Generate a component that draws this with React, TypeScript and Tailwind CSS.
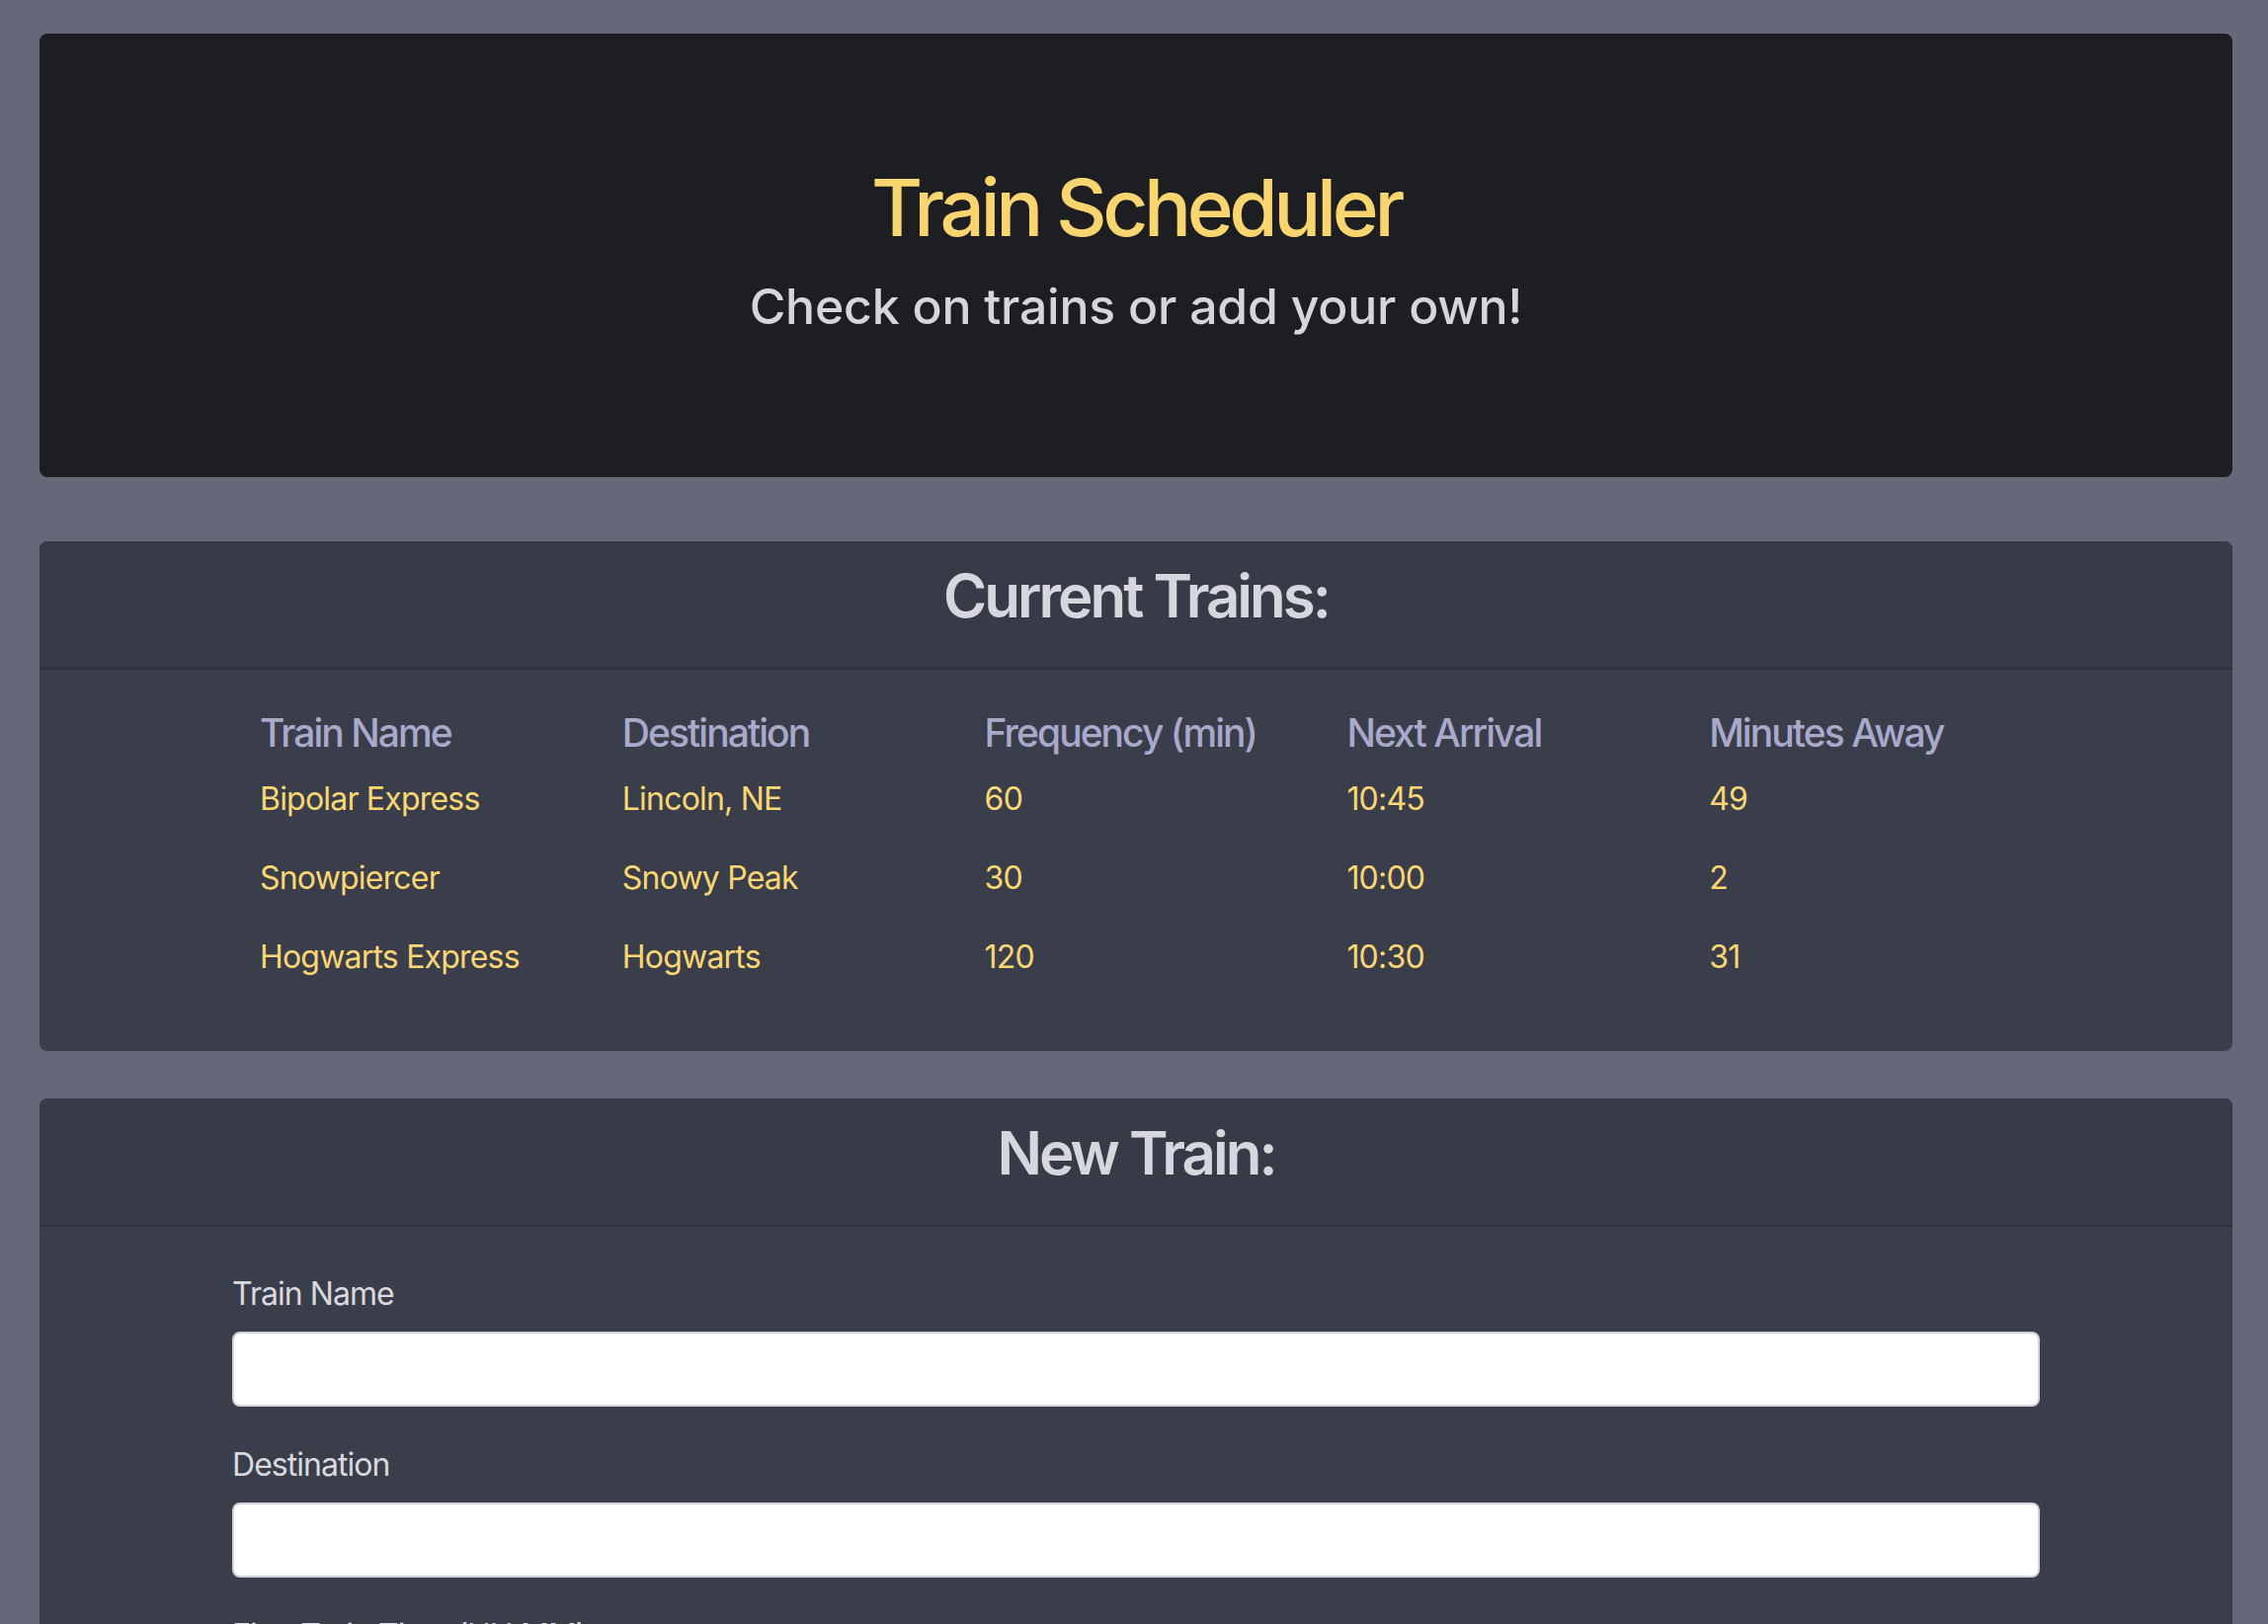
import { useState } from 'react'

interface Train {
  name: string
  destination: string
  frequency: number
  next: string
  away: number
}

const trains: Train[] = [
  { name: 'Bipolar Express', destination: 'Lincoln, NE', frequency: 60, next: '10:45', away: 49 },
  { name: 'Snowpiercer', destination: 'Snowy Peak', frequency: 30, next: '10:00', away: 2 },
  { name: 'Hogwarts Express', destination: 'Hogwarts', frequency: 120, next: '10:30', away: 31 },
]

const columns = ['Train Name', 'Destination', 'Frequency (min)', 'Next Arrival', 'Minutes Away']

function Field({ label, value, onChange }: { label: string; value: string; onChange: (v: string) => void }) {
  return (
    <div className="mb-[35px]">
      <label className="block mb-[14px] text-[32px] leading-[48px] text-[#d9dadf] tracking-[-0.03em]">{label}</label>
      <input
        type="text"
        className="block w-full h-[76px] rounded-[8px] border-2 border-[#ced4da] bg-white px-6 text-[32px] text-[#495057] focus:outline-none"
        value={value}
        onChange={e => onChange(e.target.value)}
      />
    </div>
  )
}

export default function App() {
  const [name, setName] = useState('')
  const [dest, setDest] = useState('')
  const [first, setFirst] = useState('')
  const [freq, setFreq] = useState('')

  return (
    <div className="min-h-screen bg-[#666778] pt-[34px] pl-[40px] pr-[36px] pb-10 font-[Inter,sans-serif]">
      {/* Jumbotron */}
      <header className="rounded-[8px] bg-[#1d1e22] pt-[128px] pb-[144px] text-center">
        <h1 className="mb-[23px] text-[80px] leading-[96px] font-medium text-[#f9d56f] tracking-[-0.055em]">Train Scheduler</h1>
        <p className="text-[50px] leading-[58px] font-medium text-[#d5d6db] tracking-[-0.005em]">Check on trains or add your own!</p>
      </header>

      {/* Current trains */}
      <section className="mt-[65px] rounded-[8px] overflow-hidden bg-[#393e4a]">
        <div className="bg-[#363b47] border-b-2 border-[#2e323c] pt-[17px] pb-[34px] text-center">
          <h2 className="text-[60px] leading-[77px] font-semibold text-[#d6d7dc] tracking-[-0.05em]">Current Trains:</h2>
        </div>
        <div className="pt-[40px] pb-[55px] pl-[223px]">
          <table className="w-[1834px] table-fixed border-collapse text-left">
            <thead>
              <tr>
                {columns.map(c => (
                  <th key={c} className="p-0 pb-[3px] text-[39px] leading-[48px] font-medium text-[#a9a9cc] tracking-[-0.05em]">{c}</th>
                ))}
              </tr>
            </thead>
            <tbody>
              {trains.map(t => (
                <tr key={t.name} className="text-[32px] leading-[48px] text-[#fbd774] tracking-[-0.025em]">
                  <td className="py-4 px-0">{t.name}</td>
                  <td className="py-4 px-0">{t.destination}</td>
                  <td className="py-4 px-0">{t.frequency}</td>
                  <td className="py-4 px-0">{t.next}</td>
                  <td className="py-4 px-0">{t.away}</td>
                </tr>
              ))}
            </tbody>
          </table>
        </div>
      </section>

      {/* New train form */}
      <section className="mt-[48px] rounded-[8px] overflow-hidden bg-[#393e4a]">
        <div className="bg-[#363b47] border-b-2 border-[#2e323c] pt-[17px] pb-[34px] text-center">
          <h2 className="text-[60px] leading-[77px] font-semibold text-[#d6d7dc] tracking-[-0.05em]">New Train:</h2>
        </div>
        <form className="pt-[44px] pb-[40px] px-[195px]" onSubmit={e => e.preventDefault()}>
          <Field label="Train Name" value={name} onChange={setName} />
          <Field label="Destination" value={dest} onChange={setDest} />
          <Field label="First Train Time (HH:MM)" value={first} onChange={setFirst} />
          <Field label="Frequency (min)" value={freq} onChange={setFreq} />
          <button type="submit" className="rounded-[8px] bg-[#f9d56f] px-[24px] py-[12px] text-[32px] leading-[48px] text-[#1d1e22]">
            Submit
          </button>
        </form>
      </section>
    </div>
  )
}
